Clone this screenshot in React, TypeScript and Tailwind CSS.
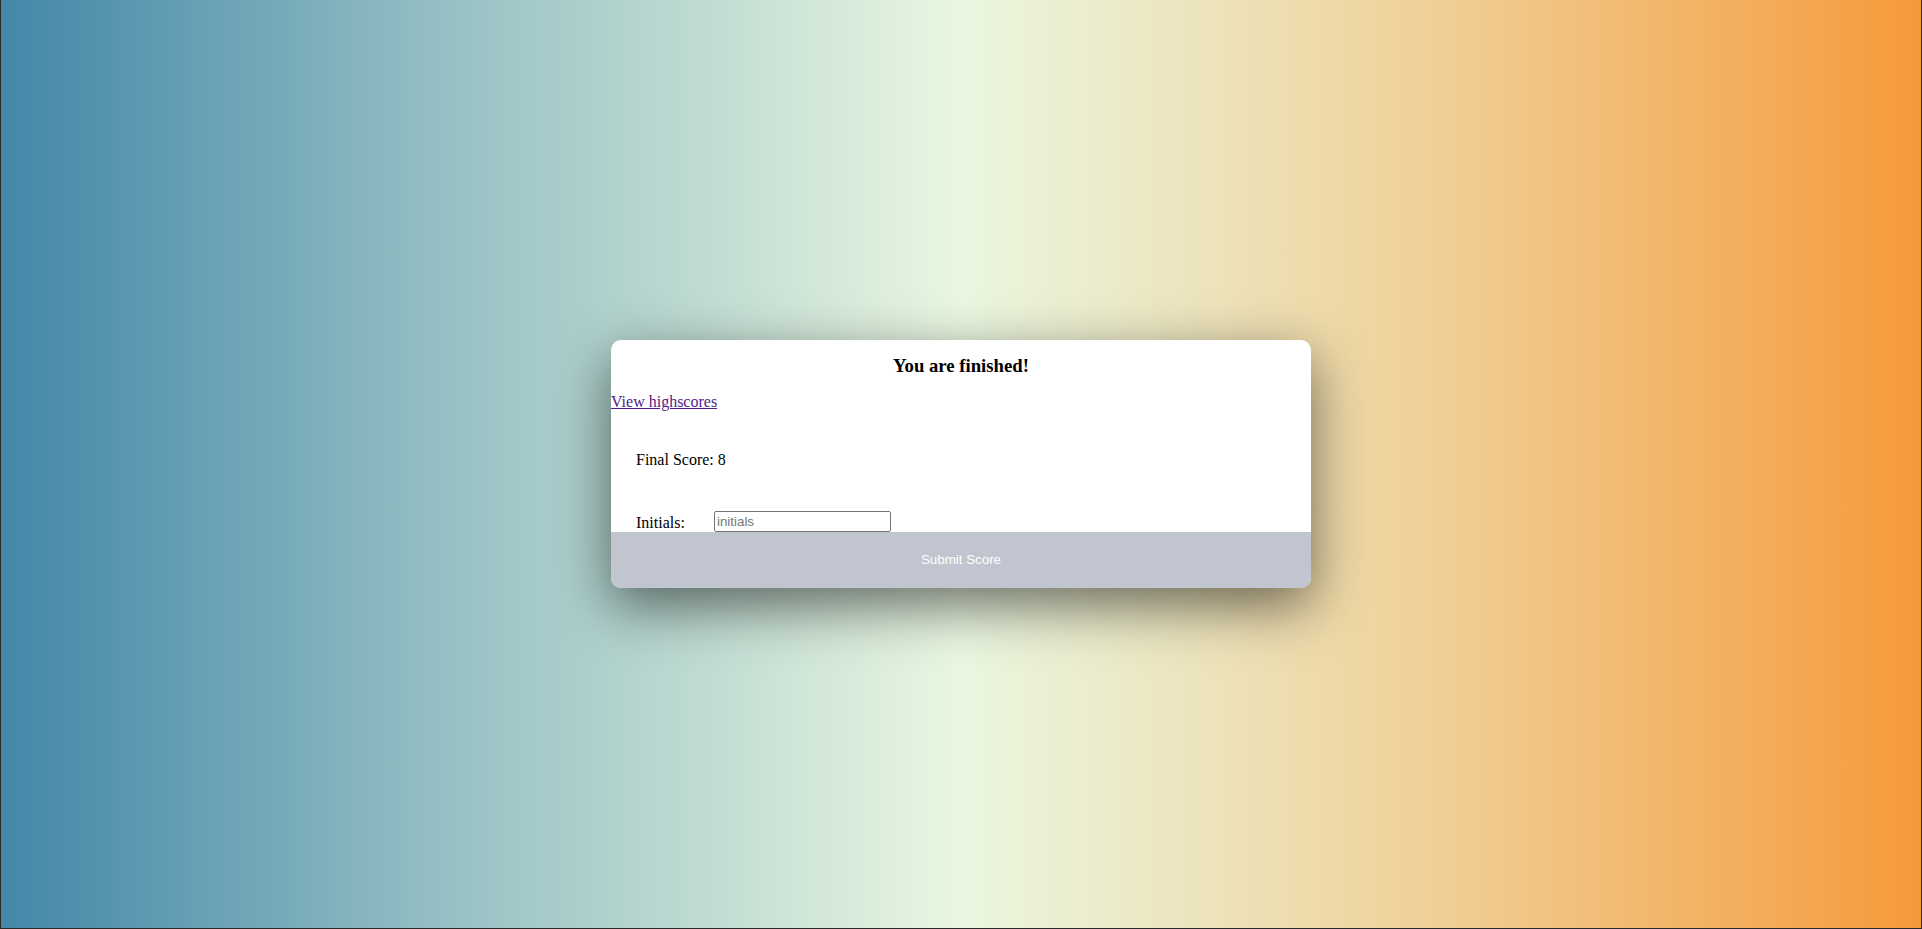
import React, { useState } from 'react';

const App = () => {
  const [initials, setInitials] = useState('');

  return (
    <div className="h-[929px] w-full flex items-center justify-center border-l border-r border-b border-[#2b2b2b] bg-[linear-gradient(to_right,#4387a8_0%,#9cc4c6_25%,#eaf7e1_50%,#efd5a0_72%,#f69a3b_100%)] font-['Liberation_Serif',serif] text-black">
      {/* Carte finale */}
      <div className="w-[700px] bg-white rounded-[10px] overflow-hidden shadow-[0_18px_55px_rgba(0,0,0,0.55)]">
        <h3 className="pt-[15px] text-center text-[18.72px] font-bold leading-[21px]">You are finished!</h3>
        <a href="#" className="block mt-[17px] text-[16px] leading-[18px] text-[#551a8b] underline w-fit">
          View highscores
        </a>
        <p className="mt-[40px] pl-[25px] text-[16px] leading-[18px]">Final Score: 8</p>
        <div className="mt-[42px] pl-[25px] flex items-center">
          <label htmlFor="initials" className="w-[78px] text-[16px] leading-[18px] pt-[2px]">Initials:</label>
          <input
            id="initials"
            type="text"
            placeholder="initials"
            value={initials}
            onChange={(e) => setInitials(e.target.value)}
            className="w-[177px] h-[21px] px-[2px] border border-[#767676] rounded-[2px] font-['Liberation_Sans',sans-serif] text-[13.33px] placeholder:text-[#757575] outline-none"
          />
        </div>
        <button
          type="button"
          className="block w-full h-[56px] bg-[#c1c5cf] text-white font-['Liberation_Sans',sans-serif] text-[13.33px]"
        >
          Submit Score
        </button>
      </div>
    </div>
  );
};

export default App;
